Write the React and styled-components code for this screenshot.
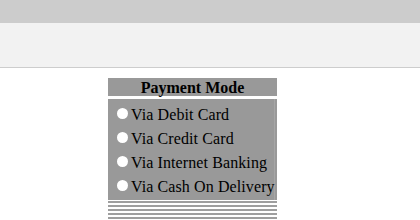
import React from "react";
import styled, { createGlobalStyle } from "styled-components";

const Global = createGlobalStyle`
  html, body { margin: 0; padding: 0; background: #ffffff; }
  body { font-family: "Liberation Serif", "Times New Roman", serif; }
`;

const TopBar = styled.div`
  height: 23px;
  background: #cccccc;
`;

const SubBar = styled.div`
  height: 44px;
  background: #f2f2f2;
  border-bottom: 1px solid #cdcdcd;
`;

const Content = styled.div`
  padding: 10px 0 0 108px;
`;

const Panel = styled.div`
  width: 169px;
  display: flex;
  flex-direction: column;
`;

const Header = styled.div`
  height: 18px;
  background: #999999;
  color: #000;
  font-weight: bold;
  font-size: 16px;
  line-height: 19px;
  text-align: center;
`;

const Body = styled.div`
  margin-top: 3px;
  background: #999999;
  padding: 2px 0 3px;
  box-shadow: inset -2px 0 0 #999999, inset -3px 0 0 #a6a6a6;
  display: flex;
  flex-direction: column;
`;

const Row = styled.label`
  height: 24px;
  display: flex;
  align-items: center;
  padding-left: 9px;
  gap: 3px;
  font-size: 16px;
  color: #000;
  white-space: nowrap;
`;

const Dot = styled.span`
  width: 11px;
  height: 11px;
  border-radius: 50%;
  background: #ffffff;
  flex: none;
`;

const Text = styled.span`
  padding-top: 3px;
  letter-spacing: 0.1px;
`;

const Stripes = styled.div`
  margin-top: 1px;
  height: 20px;
  background: repeating-linear-gradient(
    to bottom,
    #9e9e9e 0px,
    #9e9e9e 2px,
    #ffffff 2px,
    #ffffff 4px
  );
`;

const options = [
  "Via Debit Card",
  "Via Credit Card",
  "Via Internet Banking",
  "Via Cash On Delivery",
];

export default function App() {
  return (
    <>
      <Global />
      <TopBar />
      <SubBar />
      <Content>
        <Panel>
          <Header>Payment Mode</Header>
          <Body>
            {options.map((o) => (
              <Row key={o}>
                <Dot />
                <Text>{o}</Text>
              </Row>
            ))}
          </Body>
          <Stripes />
        </Panel>
      </Content>
    </>
  );
}
